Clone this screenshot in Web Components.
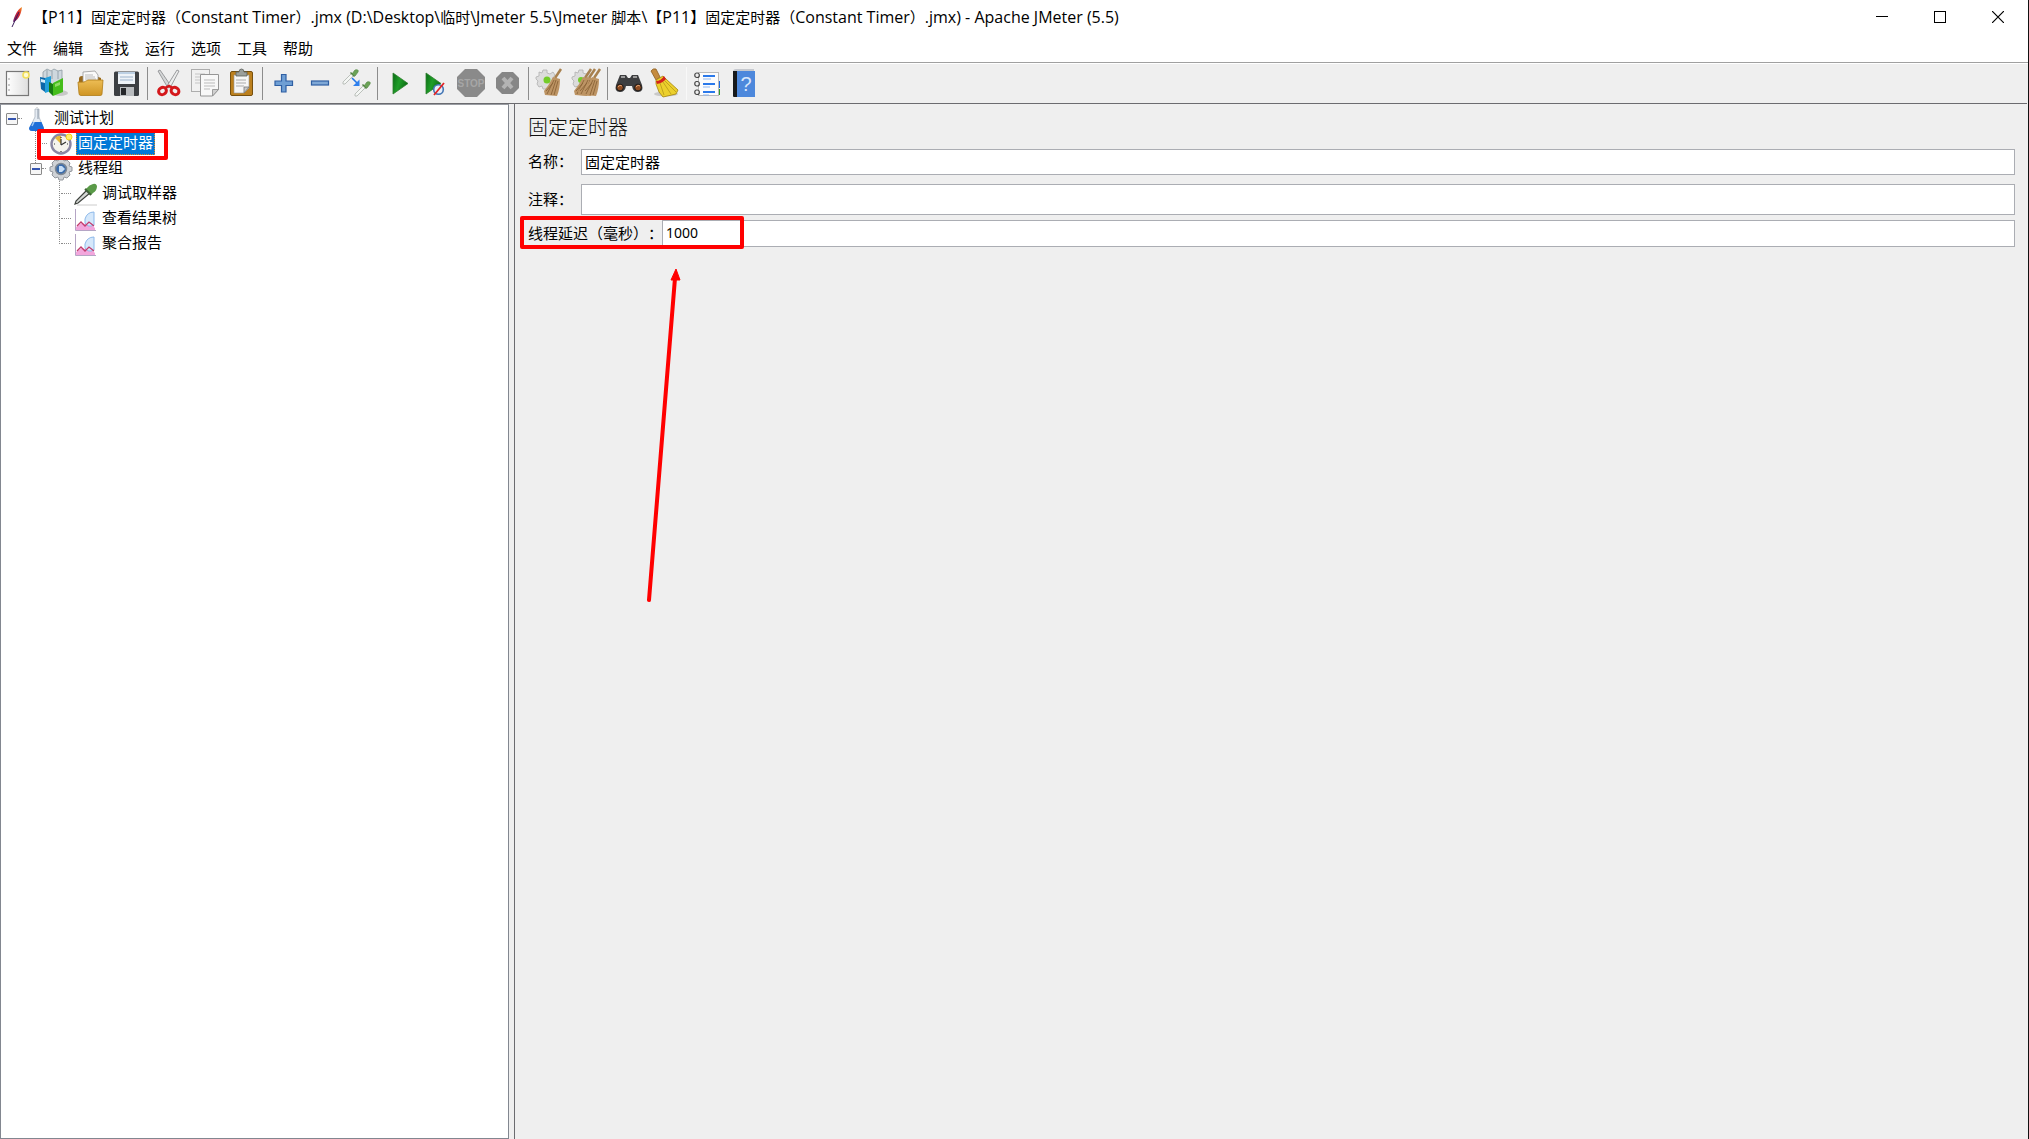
<!DOCTYPE html>
<html lang="zh-CN">
<head>
<meta charset="utf-8">
<title>Apache JMeter (5.5)</title>
<style>
html, body { margin: 0; height: 100%; overflow: hidden; }
body { font-family: "Noto Sans CJK SC", sans-serif; font-size: 15px; color: #000; background: #efefef; text-spacing-trim: space-all; }
</style>
</head>
<body>
<jm-window></jm-window>

<template id="t-window">
<style>
:host { display: flex; flex-direction: column; height: 100vh; box-sizing: border-box; border-right: 1px solid #111; background: #efefef; }
main { flex: 1; min-height: 0; display: flex; gap: 5px; border-top: 1px solid #6b6b6f; margin-right: 1px; }
jm-tree { flex: 0 0 509px; }
jm-editor { flex: 1; min-width: 0; }
jm-titlebar span { font-size: 15px; }
</style>
<jm-titlebar><span>【</span>P11<span>】固定定时器（</span>Constant Timer<span>）</span>.jmx (D:\Desktop\<span>临时</span>\Jmeter 5.5\Jmeter <span>脚本</span>\<span>【</span>P11<span>】固定定时器（</span>Constant Timer<span>）</span>.jmx) - Apache JMeter (5.5)</jm-titlebar>
<jm-menubar></jm-menubar>
<jm-toolbar></jm-toolbar>
<main>
<jm-tree></jm-tree>
<jm-editor></jm-editor>
</main>
</template>

<template id="t-titlebar">
<style>
:host { display: flex; align-items: flex-start; height: 36px; background: #fff; }
.logo { width: 16px; height: 22px; margin: 6px 8px 0 9px; flex: none; }
h1 { flex: 1; margin: 0; font: 400 16px/34px "Open Sans", "Noto Sans CJK SC", sans-serif; white-space: nowrap; }
button { width: 58px; height: 34px; padding: 0; border: 0; background: none; display: grid; place-items: center; }
button:last-of-type { margin-right: 1px; }
button svg { display: block; }
</style>
<svg class="logo" viewBox="0 0 16 22"><defs><linearGradient id="f" x1="1" y1="0" x2="0" y2="1"><stop offset="0" stop-color="#f39a22"/><stop offset=".4" stop-color="#d8232e"/><stop offset="1" stop-color="#5e1f6e"/></linearGradient></defs><path d="M13 1c-4 2-8 9-9 15 4-1 8-6 9-15z" fill="url(#f)"/><path d="M10 6 3 21" stroke="#3b1d5c" stroke-width="1" fill="none"/></svg>
<h1><slot></slot></h1>
<button aria-label="最小化"><svg width="12" height="12"><path d="M0 5.500H12" stroke="#000"/></svg></button>
<button aria-label="最大化"><svg width="12" height="12"><rect x=".5" y=".5" width="11" height="11" fill="none" stroke="#000"/></svg></button>
<button aria-label="关闭"><svg width="12" height="12"><path d="M0 0 12 12M12 0 0 12" stroke="#000" stroke-width="1.200"/></svg></button>
</template>

<template id="t-menubar">
<style>
:host { display: flex; gap: 16px; height: 26px; padding-left: 7px; background: #fff; border-bottom: 1px solid #a0a0a0; }
button { border: 0; padding: 0; background: none; font: inherit; line-height: 23px; height: 23px; color: inherit; }
</style>
<button>文件</button><button>编辑</button><button>查找</button><button>运行</button><button>选项</button><button>工具</button><button>帮助</button>
</template>

<template id="t-toolbar">
<style>
:host { display: flex; height: 40px; box-sizing: border-box; border-top: 1px solid #fff; background: #efefef; }
i { width: 1px; margin: 3px; background: #8c8c8c; }
i.faint { background: #f8f8f8; }
</style>
<jm-tool name="new" label="新建"></jm-tool><jm-tool name="templates" label="模板"></jm-tool><jm-tool name="open" label="打开"></jm-tool><jm-tool name="save" label="保存"></jm-tool><i></i>
<jm-tool name="cut" label="剪切"></jm-tool><jm-tool name="copy" label="复制"></jm-tool><jm-tool name="paste" label="粘贴"></jm-tool><i></i>
<jm-tool name="plus" label="展开"></jm-tool><jm-tool name="minus" label="折叠"></jm-tool><jm-tool name="toggle" label="切换"></jm-tool><i></i>
<jm-tool name="start" label="启动"></jm-tool><jm-tool name="startnp" label="不停顿开始"></jm-tool><jm-tool name="stop" label="停止"></jm-tool><jm-tool name="shutdown" label="关闭"></jm-tool><i></i>
<jm-tool name="clear" label="清除"></jm-tool><jm-tool name="clearall" label="清除全部"></jm-tool><i></i>
<jm-tool name="search" label="查找"></jm-tool><jm-tool name="broom" label="重置查找"></jm-tool><i class="faint"></i>
<jm-tool name="functions" label="函数助手"></jm-tool><jm-tool name="help" label="帮助"></jm-tool>
</template>

<template id="t-tree">
<style>
:host { display: block; box-sizing: border-box; background: #fff; border: 1px solid #828790; border-top-color: #9a9da3; }
[role=tree] { padding-top: 1px; }
</style>
<div role="tree">
<jm-node level="0" expander icon="flask">测试计划</jm-node>
<jm-node level="1" icon="clock" selected marked joined>固定定时器</jm-node>
<jm-node level="1" expander icon="gear" last>线程组</jm-node>
<jm-node level="2" icon="dropper" joined>调试取样器</jm-node>
<jm-node level="2" icon="chart" joined>查看结果树</jm-node>
<jm-node level="2" icon="chart" joined last>聚合报告</jm-node>
</div>
</template>

<template id="t-editor">
<style>
:host { display: block; box-sizing: border-box; border-left: 1px solid #6b6b6f; padding: 8px 12px 0 13px; }
h2 { margin: 0; font-size: 20px; font-weight: 300; line-height: 30px; height: 37px; color: #111; }
jm-field + jm-field { margin-top: 9px; }
jm-field.tight { margin-top: 5px; }
.arrow { display: block; width: 36px; height: 336px; margin: 22px 0 0 118px; }
</style>
<h2>固定定时器</h2>
<jm-field label="名称：" value="固定定时器" height="26"></jm-field>
<jm-field label="注释：" value="" height="31"></jm-field>
<jm-field class="tight" label="线程延迟（毫秒）：" value="1000" height="27" wide marked></jm-field>
<svg class="arrow" viewBox="0 0 36 336"><path d="M29 9 3 331" stroke="#f00" stroke-width="4" stroke-linecap="round"/><path d="M30 0 34 11H25z" fill="#f00" stroke="#f00"/></svg>
</template>

<script>
const bristles = '<path d="M25 0 19 9" stroke="#a8814f" stroke-width="2.500"/><path d="M17 8l7 2q0 10-3 17l-12-1-1-4q5-6 9-14z" fill="#bd9464"/><path d="M18 11 11 25M20 11l-5 15M22 12l-4 14M17 14l-7 8" stroke="#8b6438" stroke-width=".9" fill="none"/>';
const cog = '<path d="M7 1h4v3l3 1 3-2 2 3-2 3v3l2 3-3 3-3-1-2 3H7l-1-3-3 1-2-3 1-3-2-2V8l3-1V3l3 1z" fill="#dcdcdc" stroke="#b0b0b0" stroke-width=".8"/>';
const pipette = '<path d="M10 4 1 13v2l2 0 9-9z" fill="#f4f6f4" stroke="#b4bab4" stroke-width=".9"/><path d="M8.500 3.500 12.500 7.500" stroke="#4c7c3c" stroke-width="1.400"/><path d="M10 5l3-4q4-1 3 2l-3 4z" fill="#6ba356" stroke="#5d8f4c" stroke-width=".8"/>';
const ICONS = {
new: '<rect x="2.500" y="2.500" width="22" height="24" fill="url(#p)" stroke="#777" stroke-width="1.200"/><path d="M5 9v2M5 15v2M5 20v2" stroke="#999"/><circle cx="22" cy="6" r="3" fill="#fffbd0" stroke="#f2df5a" stroke-width="1.600"/>',
templates: '<ellipse cx="20" cy="24" rx="8" ry="3" fill="#c8c8c8"/><path d="M3 3l4-3 4 2 3-2 4 2 4-1v11L12 18 3 12z" fill="#cfd8de" stroke="#8d9aa2" stroke-width=".8"/><path d="M7 1v9M12 2v8M18 2v8" stroke="#95a3ac"/><path d="M0 8l5 1v14l-4-3z" fill="#0c66a8"/><path d="M5 9l6-2v15l-6 2z" fill="#219fda"/><path d="M1 10l4 1v3l-4-1z" fill="#d3ebf8"/><path d="M9 13l4 2v12l-4-4z" fill="#177b12"/><path d="M13 14l10-5v14l-10 4z" fill="#45bd1b"/><path d="M15 15l5-2v3l-5 2z" fill="#8fdc66"/>',
open: '<path d="M3 10q0-3 3-3h14l5 2v10H3z" fill="#9a6a1c"/><path d="M7 3l12-1 3 4v10H7z" fill="#fafafa" stroke="#999" stroke-width=".8"/><path d="M9 6h8M9 8h10M9 10h11" stroke="#aaa" stroke-width=".8"/><path d="M2 13q7 1 10-2h15l-1 14q0 1.500-2 1.500H5q-2 0-2-2z" fill="url(#g)" stroke="#b07c16" stroke-width=".8"/>',
save: '<rect x="2" y="2.500" width="25" height="24.500" rx="1.500" fill="#3c3f43"/><rect x="6" y="3" width="17" height="12" fill="#eef3f8"/><rect x="6" y="3" width="17" height="2" fill="#bcd0e4"/><path d="M8 8h13M8 11h13" stroke="#9cb4cc" stroke-width="1.200"/><rect x="8" y="18" width="14" height="9" fill="#b9bcbf"/><rect x="9" y="19" width="5" height="7" fill="#25272a"/>',
cut: '<path d="M3 2 5 1 16 17l-3 2z" fill="#d5d7d8" stroke="#858789" stroke-width=".8"/><path d="M24 2 22 1 12 17l3 2z" fill="#eceded" stroke="#858789" stroke-width=".8"/><ellipse cx="7.500" cy="22" rx="4" ry="3.500" transform="rotate(-30 7.500 22)" fill="#efefef" stroke="#d4181c" stroke-width="3"/><ellipse cx="20" cy="22" rx="4" ry="3.500" transform="rotate(30 20 22)" fill="#efefef" stroke="#d4181c" stroke-width="3"/><path d="M10 19l4-2 4 2" stroke="#d4181c" stroke-width="2.500" fill="none"/>',
copy: '<rect x=".5" y=".5" width="18" height="22" fill="#f1f1f1" stroke="#adadad"/><path d="M4 5h10M4 8h5M4 11h5M4 14h5" stroke="#c5c5c5"/><path d="M9.500 5.500h18v15l-6 6.500h-12z" fill="#f8f8f8" stroke="#969696"/><path d="M13 11h11M13 14h11M13 17h11M13 20h6" stroke="#bbb"/><path d="M27.500 20.500h-6V27z" fill="#d0d0d0" stroke="#8b8b8b" stroke-width=".8"/>',
paste: '<rect x="3.500" y="2.500" width="22" height="24" rx="1.500" fill="#bc801e" stroke="#77500f"/><path d="M7 6h15v13l-5 5H7z" fill="#f6f6f6" stroke="#999" stroke-width=".6"/><path d="M9 11h10M9 14h10M9 17h8" stroke="#aaa"/><path d="M22 18h-5v6z" fill="#c9c9c9" stroke="#777" stroke-width=".8"/><path d="M9 3h3q0-3 2.500-3T17 3h3v4H9z" fill="#9b9f9b" stroke="#5c605c" stroke-width=".8"/>',
plus: '<path d="M11.500 5.500h4.500v6.500h6.500v4.500H16v6.500h-4.500v-6.500H5v-4.500h6.500z" fill="#6f9fd4" stroke="#2f5fa3" stroke-width="1.200"/>',
minus: '<rect x="5.500" y="12" width="17" height="4" fill="#7fa8d6" stroke="#2f5fa3" stroke-width="1.200"/>',
toggle: pipette + '<g transform="translate(12 12)">' + pipette + '</g><path d="M10 9l5 5" stroke="#1f75e8" stroke-width="1.600"/><path d="M17.500 10.500v6.500h-6.500z" fill="#2f80ee"/>',
start: '<path d="M8 4 23 14.500 8 25z" fill="url(#gr)" stroke="#2d7f2d" stroke-width=".8"/>',
startnp: '<path d="M5 4 20 14.500 5 25z" fill="url(#gr)" stroke="#2d7f2d" stroke-width=".8"/><circle cx="17.500" cy="20.500" r="4.800" fill="#e6eef9" stroke="#4275b4" stroke-width="1.600"/><path d="M13 26 23 14" stroke="#e32222" stroke-width="1.800"/>',
stop: '<path d="M8 0h12l8 8v12l-8 8H8l-8-8V8z" fill="#8a8a8a"/><text x="14" y="18" text-anchor="middle" font-family="Liberation Sans" font-weight="700" font-size="10" fill="#a6a6a6">STOP</text>',
shutdown: '<path d="M9 3h11l6 6v10l-6 6H9l-6-6V9z" fill="#868686"/><path d="M10 9l9 10M19 9l-9 10" stroke="#b3b3b3" stroke-width="4"/>',
clear: cog + '<circle cx="11" cy="11" r="3.500" fill="#74cc2a"/>' + bristles,
clearall: cog + '<circle cx="9" cy="11" r="3" fill="#74cc2a"/><g transform="translate(-6 0)">' + bristles + '</g><g transform="translate(-2 0)">' + bristles + '</g><g transform="translate(3 0)">' + bristles + '</g>',
search: '<path d="M5 6h6l2 3h2l2-3h6l4 10q2 7-4 7-5 0-6-6h-6q-1 6-6 6-6 0-4-7z" fill="#3d3e40"/><path d="M6 8h4M18 8h4" stroke="#9b9b9b" stroke-width="2"/><circle cx="5" cy="18.500" r="3.400" fill="#8c4a20" stroke="#1c1c1c"/><circle cx="23" cy="18.500" r="3.400" fill="#8c4a20" stroke="#1c1c1c"/><path d="M3 18q2-3 4-1M21 18q2-3 4-1" stroke="#e0a070" fill="none"/>',
broom: '<ellipse cx="15" cy="25" rx="12" ry="2.500" fill="#c9c9c9"/><path d="M0 2q2-3 5-2l4 8-4 3z" fill="#c58b3e" stroke="#8b5d20" stroke-width=".8"/><path d="M5 11l7-4 3 3 12 11-2 4-13 3-4-5-3-8z" fill="#ecd02c" stroke="#a3840f" stroke-width=".8"/><path d="M9 14l4 12M12 13l8 12M14 12l11 11" stroke="#b6981a" stroke-width=".8"/><path d="M5 12q5 0 8-5l2 3q-3 4-9 5z" fill="#d4221d"/>',
functions: '<path d="M24 12h2v7h-2z" fill="#1d6be0"/><path d="M24 20h2v6h-2z" fill="#2f9a2a"/><rect x="4.500" y="3.500" width="20" height="23" fill="#fcfcfc" stroke="#bbb"/><path d="M9 7h12M9 15h12M9 23h12" stroke="#2b79ea" stroke-width="2"/><path d="M9 10h8M9 18h7M9 26h6" stroke="#8fb7f2" stroke-width="1"/><g fill="#eee" stroke="#444" stroke-width="1.200"><rect x=".8" y="4" width="4.500" height="4.500" rx="2"/><rect x=".8" y="12.500" width="4.500" height="4.500" rx="2"/><rect x=".8" y="21" width="4.500" height="4.500" rx="2"/></g>',
help: '<path d="M3 3q0-3 3-3h18v3z" fill="#c6c9cf"/><rect x="7" y="2" width="18" height="26" fill="#4d88dc"/><path d="M3 2h4v26H4q-1 0-1-1z" fill="#17191c"/><text x="16" y="22" text-anchor="middle" font-family="Liberation Sans" font-size="20" fill="#d9e7fb">?</text>',
flask: '<path d="M10 2h4v8l4 10q1 4-2 4H7q-3 0-2-4l5-10z" fill="#e6ecf3" stroke="#a9b4bf" stroke-width=".8"/><path d="M7.500 15h9l2.500 6q0 3-3 3H7q-3 0-3-3z" fill="#1e6fd8"/><path d="M9 15l-2 4" stroke="#9cc6f5" stroke-width="1.500"/><path d="M13 2v10" stroke="#8b98a6"/><path d="M11 0h2" stroke="#bbb"/>',
clock: '<circle cx="12" cy="12" r="9.500" fill="#f6f4ee" stroke="#8b87a3" stroke-width="2.400"/><path d="M12 12 6 6q3-3 6-2z" fill="#e6b73a"/><path d="M12 13V7M12 13l5-3M12 5v1M12 19v1M5 12h1M18 12h1" stroke="#333" stroke-width="1.200"/><circle cx="20" cy="5" r="3" fill="#fff06a" stroke="#f0d41a"/>',
gear: '<path d="M10 1h4l1 3 3-1 3 3-1 3 3 1v4l-3 1 1 3-3 3-3-1-1 3h-4l-1-3-3 1-3-3 1-3-3-1v-4l3-1-1-3 3-3 3 1z" fill="#cfd2d6" stroke="#94989e"/><circle cx="12" cy="12" r="5.500" fill="#3b6cab" stroke="#7f8894" stroke-width="1.500"/><path d="M10 9h3l3 3-3 3h-3z" fill="#c4dcf6"/>',
dropper: '<path d="M4 23h20" stroke="#ccc"/><path d="M14 8 3 19l-1 3 3-1L17 11z" fill="#d5d8d5" stroke="#3e423e" stroke-width="1.200"/><path d="M12 7l6 6 2-2q4-2 4-7-1-3-4-2-4 1-6 4z" fill="#5a9a48"/><path d="M12 7l6 6" stroke="#3f5f38" stroke-width="2"/>',
chart: '<path d="M3 23v-3l6-4 3 1 3-3 7 7v2z" fill="#f2a6dc"/><path d="M12 12q2-7 9-7v13q-6 3-9-2z" fill="#d5e8fb" stroke="#8db9ea"/><path d="M4 19l4-4 4 4 4-4 5 4" stroke="#c23c6e" fill="none" stroke-width="1.300"/><path d="M2.500 2v21.500H23" stroke="#b5a5c5" fill="none"/>'
};
const DEFS = '<defs><linearGradient id="p"><stop stop-color="#fff"/><stop offset="1" stop-color="#dedede"/></linearGradient><linearGradient id="g" x2="0" y2="1"><stop stop-color="#edbd55"/><stop offset="1" stop-color="#cf9524"/></linearGradient><linearGradient id="gr" x2="1" y2=".4"><stop stop-color="#0a6d16"/><stop offset=".5" stop-color="#1f9e28"/><stop offset="1" stop-color="#0c6d14"/></linearGradient></defs>';

function fromTemplate(tag, id) {
  customElements.define(tag, class extends HTMLElement {
    constructor() {
      super();
      this.attachShadow({ mode: 'open' }).append(document.getElementById(id).content.cloneNode(true));
    }
  });
}

customElements.define('jm-tool', class extends HTMLElement {
  connectedCallback() {
    this.attachShadow({ mode: 'open' }).innerHTML = `<style>
:host { display: block; flex: none; width: 36px; }
button { display: block; width: 100%; height: 38px; padding: 0 4px; border: 0; background: none; }
svg { display: block; overflow: visible; }
</style><button aria-label="${this.getAttribute('label')}"><svg width="28" height="28" viewBox="0 0 28 28" fill="none">${DEFS}${ICONS[this.getAttribute('name')]}</svg></button>`;
  }
});

customElements.define('jm-node', class extends HTMLElement {
  connectedCallback() {
    const level = Number(this.getAttribute('level'));
    const on = n => this.hasAttribute(n);
    this.setAttribute('role', 'treeitem');
    this.attachShadow({ mode: 'open' }).innerHTML = `<style>
:host { display: flex; align-items: center; height: 25px; padding-left: ${level * 24}px; position: relative; line-height: 18px; }
.lead { width: 22px; height: 25px; flex: none; display: flex; align-items: center; box-sizing: border-box; padding-left: 5px; }
button { width: 12px; height: 12px; padding: 0; border: 1px solid #8a8a8a; border-radius: 1px; background: #f6f6f6; display: grid; place-items: center; position: relative; }
button::before { content: ""; width: 8px; height: 2px; background: #3555b0; }
.dots { flex: 1; border-top: 1px dotted #8c8c8c; margin-right: 1px; }
.joined { padding-left: 12px; }
.joined .dots { margin-right: 0; }
.line { position: absolute; top: 0; left: ${level * 24 + 10}px; height: 25px; border-left: 1px dotted #8c8c8c; }
.line.end { height: 13px; }
svg { width: 24px; height: 24px; flex: none; margin: 0 3px 0 2px; }
.text { padding: 0 1px 3px; border: 1px solid transparent; white-space: nowrap; }
.selected { background: #0078d7; color: #fff; border: 1px dotted #e08a28; }
.mark { position: absolute; left: 36px; top: -2px; width: 123px; height: 23px; border: 4px solid #f00; border-radius: 2px; z-index: 2; }
</style>
${level ? `<span class="line ${on('last') ? 'end' : ''}"></span>` : ''}
<span class="lead ${on('joined') ? 'joined' : ''}">${on('expander') ? '<button aria-label="折叠"></button>' : ''}<span class="dots"></span></span>
<svg viewBox="0 0 24 24" fill="none">${ICONS[this.getAttribute('icon')]}</svg>
<span class="text ${on('selected') ? 'selected' : ''}"><slot></slot></span>
${on('marked') ? '<span class="mark"></span>' : ''}`;
  }
});

customElements.define('jm-field', class extends HTMLElement {
  connectedCallback() {
    const a = n => this.getAttribute(n);
    const wide = this.hasAttribute('wide');
    this.attachShadow({ mode: 'open' }).innerHTML = `<style>
:host { display: flex; align-items: center; position: relative; }
label { flex: none; width: ${wide ? 134 : 53}px; line-height: 22px; padding-bottom: 2px; white-space: nowrap; }
input { flex: 1; min-width: 0; height: ${a('height')}px; box-sizing: border-box; border: 1px solid #abadb3; border-radius: 0; padding: 0 3px 2px; background: #fff; color: #000; outline: 0; font: ${wide ? '14px "Noto Sans"' : '15px "Noto Sans CJK SC"'}, sans-serif; }
.mark { position: absolute; left: -8px; top: -4px; width: 216px; height: 25px; border: 4px solid #f00; border-radius: 2px; }
</style><label for="v">${a('label')}</label><input id="v" value="${a('value')}">${this.hasAttribute('marked') ? '<span class="mark"></span>' : ''}`;
  }
});

for (const n of ['titlebar', 'menubar', 'toolbar', 'tree', 'editor', 'window']) fromTemplate('jm-' + n, 't-' + n);
</script>
</body>
</html>
